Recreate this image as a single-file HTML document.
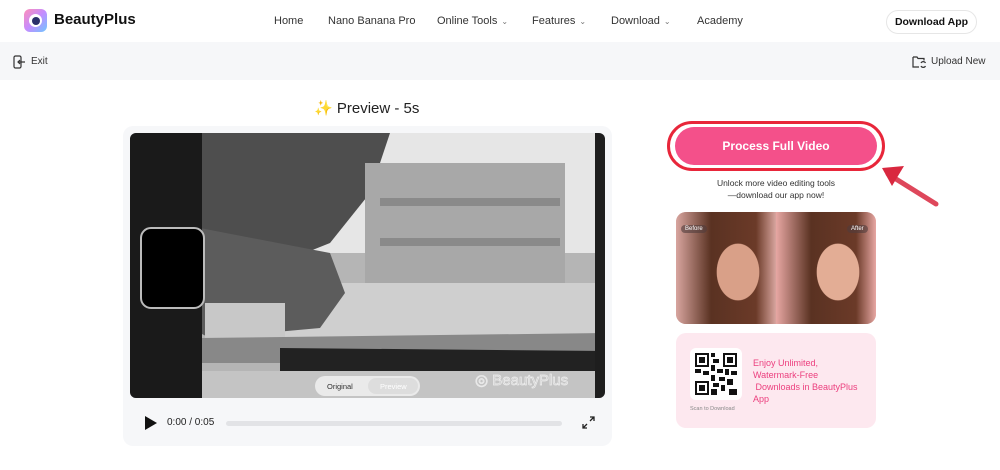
<!DOCTYPE html>
<html><head><meta charset="utf-8"><style>
*{margin:0;padding:0;box-sizing:border-box}
body{width:1000px;height:470px;background:#fff;font-family:"Liberation Sans",sans-serif;color:#222;position:relative;overflow:hidden}
.abs{position:absolute}
.nav{font-size:11px;color:#333;top:15px}
.chev{font-size:8px;color:#777;margin-left:4px}
</style></head><body>
<!-- header -->
<div class="abs" style="left:24px;top:9px;width:23px;height:23px;border-radius:6px;background:linear-gradient(135deg,#ff8fb8,#c58cff 50%,#6fc6ff)"></div>
<div class="abs" style="left:29px;top:14px;width:13px;height:13px;border-radius:50%;background:#fff"></div>
<div class="abs" style="left:32px;top:17px;width:8px;height:8px;border-radius:50%;background:#2a2f6b"></div>
<div class="abs" style="left:54px;top:11px;font-size:15px;font-weight:bold;color:#111">BeautyPlus</div>
<div class="abs nav" style="left:274px">Home</div>
<div class="abs nav" style="left:328px">Nano Banana Pro</div>
<div class="abs nav" style="left:437px">Online Tools<span class="chev">⌄</span></div>
<div class="abs nav" style="left:532px">Features<span class="chev">⌄</span></div>
<div class="abs nav" style="left:611px">Download<span class="chev">⌄</span></div>
<div class="abs nav" style="left:697px">Academy</div>
<div class="abs" style="left:886px;top:10px;width:91px;height:24px;border:1px solid #e6e6e6;border-radius:12px;font-size:10.5px;font-weight:bold;text-align:center;line-height:22px;color:#111">Download App</div>
<!-- toolbar -->
<div class="abs" style="left:0;top:42px;width:1000px;height:38px;background:#f6f7f9"></div>
<svg class="abs" style="left:13px;top:55px" width="14" height="14" viewBox="0 0 14 14" fill="none" stroke="#333" stroke-width="1.2"><rect x="1" y="1" width="7" height="12" rx="1.5"/><path d="M12 7H5M7 5L5 7l2 2"/></svg>
<div class="abs" style="left:31px;top:56px;font-size:10px;color:#333">Exit</div>
<svg class="abs" style="left:912px;top:55px" width="15" height="14" viewBox="0 0 15 14" fill="none" stroke="#333" stroke-width="1.2"><path d="M1 2h4l1 1.5h6v2M1 2v10h6"/><path d="M9 8a2.5 2.5 0 0 1 4.5 0M13.5 11a2.5 2.5 0 0 1-4.5 0"/></svg>
<div class="abs" style="left:931px;top:56px;font-size:10px;color:#333">Upload New</div>
<!-- preview title -->
<div class="abs" style="left:314px;top:99px;font-size:15px;color:#222"><span style="color:#f6b04a">✨</span> Preview - 5s</div>
<!-- video card -->
<div class="abs" style="left:123px;top:126px;width:489px;height:320px;background:#f6f7f9;border-radius:10px"></div>
<svg class="abs" style="left:130px;top:133px;border-radius:6px" width="475" height="265" viewBox="0 0 475 265">
<rect width="475" height="265" fill="#b5b5b5"/>
<polygon points="180,0 475,0 475,120 180,120" fill="#e6e6e6"/>
<polygon points="70,0 260,0 240,60 200,110 150,130 70,110" fill="#4e4e4e"/>
<rect x="235" y="30" width="200" height="125" fill="#a8a8a8"/>
<rect x="250" y="65" width="180" height="8" fill="#8a8a8a"/>
<rect x="250" y="105" width="180" height="8" fill="#8a8a8a"/>
<polygon points="200,150 475,150 475,225 70,225 150,175" fill="#cfcfcf"/>
<polygon points="70,95 200,120 215,160 190,195 80,205 70,200" fill="#5c5c5c"/>
<rect x="75" y="170" width="80" height="35" fill="#c8c8c8"/>
<polygon points="70,205 475,200 475,230 70,230" fill="#888"/>
<polygon points="150,215 475,218 475,240 150,238" fill="#222"/>
<rect x="70" y="238" width="405" height="27" fill="#c4c4c4"/>
<rect x="0" y="0" width="72" height="265" fill="#1a1a1a"/>
<rect x="465" y="0" width="10" height="265" fill="#1e1e1e"/>
<rect x="11" y="95" width="63" height="80" rx="10" fill="#000" stroke="#bbb" stroke-width="2"/>
<rect x="185" y="243" width="105" height="20" rx="10" fill="#eee" opacity=".9"/>
<rect x="238" y="245" width="50" height="16" rx="8" fill="#ddd"/>
<text x="197" y="256" font-size="7.5" fill="#333" font-family="Liberation Sans">Original</text>
<text x="250" y="256" font-size="7.5" fill="#fff" font-family="Liberation Sans">Preview</text>
<text x="345" y="252" font-size="15" fill="none" stroke="#eee" stroke-width=".7" font-family="Liberation Sans">◎ BeautyPlus</text>
</svg>
<svg class="abs" style="left:144px;top:415px" width="14" height="16"><path d="M1 1L13 8L1 15Z" fill="#111"/></svg>
<div class="abs" style="left:167px;top:417px;font-size:10px;color:#222">0:00 / 0:05</div>
<div class="abs" style="left:226px;top:421px;width:336px;height:5px;border-radius:3px;background:#e2e3e6"></div>
<svg class="abs" style="left:582px;top:416px" width="13" height="13" fill="none" stroke="#222" stroke-width="1.3"><path d="M8 1h4v4M12 1L8 5M5 12H1V8M1 12l4-4"/></svg>
<!-- right column -->
<div class="abs" style="left:667px;top:121px;width:218px;height:50px;border:3px solid #e8263a;border-radius:25px"></div>
<div class="abs" style="left:675px;top:127px;width:202px;height:38px;border-radius:19px;background:#f4508a;color:#fff;font-weight:bold;font-size:12px;text-align:center;line-height:38px">Process Full Video</div>
<svg class="abs" style="left:878px;top:158px" width="62" height="50"><path d="M58 46L10 16" stroke="#d9283f" stroke-width="5" stroke-linecap="round" opacity=".85"/><path d="M4 10L26 8L14 28Z" fill="#d9283f"/></svg>
<div class="abs" style="left:676px;top:177px;width:200px;text-align:center;font-size:8.5px;line-height:12px;color:#333">Unlock more video editing tools<br>—download our app now!</div>
<div class="abs" style="left:676px;top:212px;width:200px;height:112px;border-radius:10px;overflow:hidden;background:#d9a09a">
 <div class="abs" style="left:0;top:0;width:100px;height:112px;background:radial-gradient(ellipse 30px 40px at 62px 60px,#d9a088 70%,transparent 72%),linear-gradient(90deg,#d8a59f 0,#5a3222 35%,#6b3a28 80%,#d8a59f)"></div>
 <div class="abs" style="left:100px;top:0;width:100px;height:112px;background:radial-gradient(ellipse 30px 40px at 62px 60px,#e3ad95 70%,transparent 72%),linear-gradient(90deg,#e7a7a3 0,#5a3222 35%,#6b3a28 80%,#e7a7a3)"></div>
 <div class="abs" style="left:5px;top:13px;font-size:6px;color:#fff;background:rgba(80,60,60,.6);border-radius:6px;padding:1px 4px">Before</div>
 <div class="abs" style="left:171px;top:13px;font-size:6px;color:#fff;background:rgba(80,60,60,.6);border-radius:6px;padding:1px 4px">After</div>
</div>
<div class="abs" style="left:676px;top:333px;width:200px;height:95px;border-radius:10px;background:#fde8ef"></div>
<div class="abs" style="left:690px;top:348px;width:52px;height:52px;border-radius:6px;background:#fff"></div>
<svg class="abs" style="left:695px;top:353px" width="42" height="42" viewBox="0 0 21 21"><rect width="21" height="21" fill="#fff"/><g fill="#111"><path d="M0 0h7v7H0zM14 0h7v7h-7zM0 14h7v7H0z"/></g><g fill="#fff"><path d="M1 1h5v5H1zM15 1h5v5h-5zM1 15h5v5H1z"/></g><g fill="#111"><path d="M2 2h3v3H2zM16 2h3v3h-3zM2 16h3v3H2zM8 0h2v2H8zM9 3h3v2H9zM8 6h2v3H8zM11 8h3v2h-3zM0 8h3v2H0zM4 9h3v2H4zM15 8h2v3h-2zM18 9h3v2h-3zM8 11h2v3H8zM12 12h3v2h-3zM16 13h3v3h-3zM9 15h3v2H9zM13 16h2v3h-2zM8 18h3v3H8zM17 18h4v3h-4z"/></g></svg>
<div class="abs" style="left:690px;top:406px;font-size:5.5px;color:#888">Scan to Download</div>
<div class="abs" style="left:753px;top:357px;font-size:9px;line-height:12px;color:#ec3f7e">Enjoy Unlimited,<br>Watermark-Free<br>&nbsp;Downloads in BeautyPlus<br>App</div>
</body></html>
